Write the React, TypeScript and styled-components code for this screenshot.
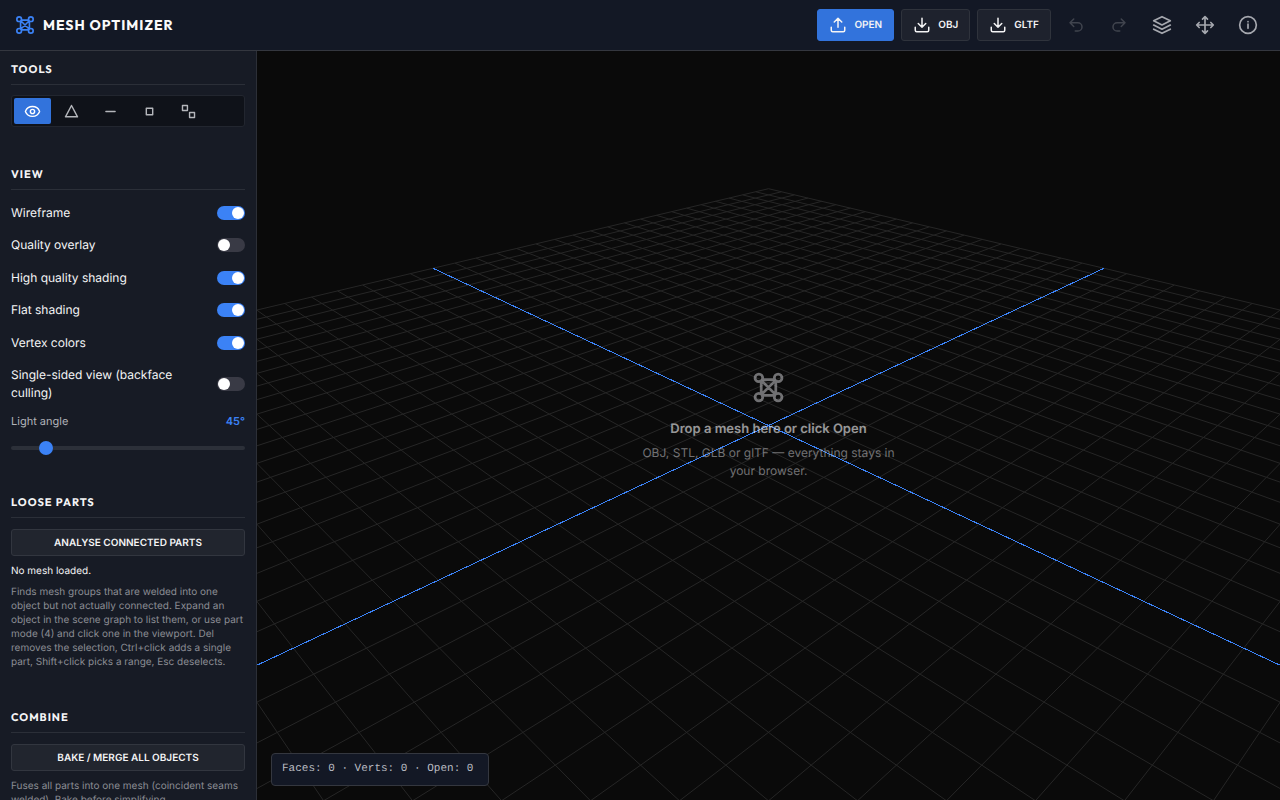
import React, { useState } from "react";
import styled, { createGlobalStyle } from "styled-components";

const GlobalStyle = createGlobalStyle`
  *, *::before, *::after { box-sizing: border-box; }
  html, body, #root { height: 100%; }
  body {
    margin: 0;
    background: #0a0a0a;
    color: #f4f4f5;
    font-family: Inter, "Liberation Sans", sans-serif;
    font-size: 12px;
    line-height: 18px;
    text-rendering: geometricPrecision;
    overflow: hidden;
  }
  button, input { font: inherit; color: inherit; margin: 0; text-rendering: inherit; }
  h1, h2, p { margin: 0; }
`;

const Shell = styled.div`
  display: flex;
  flex-direction: column;
  height: 100vh;
`;

const TopBar = styled.header`
  display: flex;
  align-items: center;
  justify-content: space-between;
  flex: none;
  padding: 9px 14px 9px 15px;
  background: #131825;
  border-bottom: 1px solid #34373f;
`;

const Brand = styled.div`
  display: flex;
  align-items: center;
  gap: 8px;
  color: #3b82f6;
`;

const BrandName = styled.h1`
  color: #fafafa;
  font-family: Outfit, Lato, sans-serif;
  font-size: 14px;
  line-height: 18px;
  font-weight: 700;
  letter-spacing: 1px;
`;

const Actions = styled.div`
  display: flex;
  align-items: center;
  gap: 7px;
`;

const ActionButton = styled.button<{ $primary?: boolean }>`
  display: flex;
  align-items: center;
  gap: 7px;
  height: 32px;
  padding: 0 11px;
  border: 1px solid ${(p) => (p.$primary ? "#3273dc" : "#2f333c")};
  border-radius: 3px;
  background: ${(p) => (p.$primary ? "#3273dc" : "#1e222d")};
  font-size: 10px;
  font-weight: 600;
`;

const IconButton = styled.button`
  display: grid;
  place-items: center;
  width: 36px;
  height: 32px;
  padding: 0;
  border: 0;
  background: none;
  color: #a6a8af;
  &:disabled { color: #40444e; }
`;

const Body = styled.div`
  display: flex;
  flex: 1;
  min-height: 0;
`;

const Sidebar = styled.aside`
  display: flex;
  flex-direction: column;
  flex: none;
  gap: 40px;
  width: 257px;
  padding: 11px;
  background: #171b25;
  border-right: 1px solid #2c2f37;
  overflow-y: auto;
  scrollbar-width: none;
`;

const Section = styled.section`
  display: flex;
  flex-direction: column;
  flex: none;
`;

const SectionTitle = styled.h2`
  margin-bottom: 10px;
  padding-bottom: 8px;
  border-bottom: 1px solid #2b2f38;
  font-family: Outfit, Lato, sans-serif;
  font-size: 11px;
  line-height: 14px;
  font-weight: 700;
  letter-spacing: 1px;
`;

const ToolGroup = styled.div`
  display: flex;
  gap: 2px;
  padding: 2px;
  border: 1px solid #22262f;
  border-radius: 3px;
  background: #0f1219;
`;

const ToolButton = styled.button`
  display: grid;
  place-items: center;
  width: 37px;
  height: 26px;
  padding: 0;
  border: 0;
  border-radius: 2px;
  background: none;
  color: #b4b6bb;
  &[aria-pressed="true"] { background: #3273dc; color: #fff; }
`;

const ToggleList = styled.div`
  display: flex;
  flex-direction: column;
  justify-content: space-between;
  min-height: 202px;
  padding-top: 4px;
`;

const ToggleRow = styled.label`
  display: flex;
  align-items: center;
  justify-content: space-between;
  gap: 28px;
`;

const Switch = styled.input`
  appearance: none;
  flex: none;
  display: flex;
  width: 28px;
  height: 14px;
  padding: 1px;
  border-radius: 7px;
  background: #393a45;
  &::before {
    content: "";
    width: 12px;
    height: 12px;
    border-radius: 50%;
    background: #fff;
  }
  &:checked { background: #3b82f6; justify-content: flex-end; }
`;

const SliderHead = styled.div`
  display: flex;
  justify-content: space-between;
  margin: 11px 0 12px;
  font-size: 11px;
  line-height: 16px;
  color: #b0b2b8;
  output { color: #3b82f6; font-weight: 600; }
`;

const Slider = styled.input`
  appearance: none;
  width: 100%;
  height: 14px;
  background: none;
  &::-webkit-slider-runnable-track {
    height: 4px;
    border-radius: 2px;
    background: #2c3039;
  }
  &::-webkit-slider-thumb {
    appearance: none;
    width: 14px;
    height: 14px;
    margin-top: -5px;
    border-radius: 50%;
    background: #3b82f6;
  }
`;

const WideButton = styled.button`
  height: 27px;
  margin: 1px 0 8px;
  padding: 0 11px;
  border: 1px solid #32363f;
  border-radius: 3px;
  background: #21252e;
  font-size: 10px;
  font-weight: 600;
`;

const Status = styled.p`
  margin-bottom: 6px;
  font-size: 10px;
  line-height: 15px;
`;

const Hint = styled.p`
  margin-bottom: 1px;
  color: #8b8d94;
  font-size: 10px;
  line-height: 14px;
`;

const Viewport = styled.main`
  display: grid;
  place-items: center;
  position: relative;
  flex: 1;
  min-width: 0;
  overflow: hidden;
`;

const Scene = styled.svg`
  position: absolute;
  inset: 0;
  width: 100%;
  height: 100%;
`;

const EmptyState = styled.div`
  position: relative;
  display: flex;
  flex-direction: column;
  align-items: center;
  max-width: 260px;
  text-align: center;
  opacity: 0.6;
  color: #b4b4b8;
`;

const EmptyTitle = styled.p`
  margin: 16px 0 6px;
  color: #f4f4f5;
  font-size: 13px;
  font-weight: 600;
`;

const Stats = styled.div`
  position: absolute;
  left: 14px;
  bottom: 14px;
  min-width: 218px;
  padding: 7px 10px;
  border: 1px solid #34373f;
  border-radius: 4px;
  background: #131825;
  color: #b9bbc1;
  font-family: "Liberation Mono", monospace;
  font-size: 11px;
  line-height: 17px;
  white-space: pre;
`;

const Stroke = styled.svg`
  display: block;
  flex: none;
  fill: none;
  stroke: currentColor;
  stroke-linecap: round;
  stroke-linejoin: round;
`;

type IconName =
  | "mesh" | "upload" | "download" | "undo" | "redo" | "layers" | "move" | "info"
  | "eye" | "face" | "edge" | "vertex" | "part";

const shapes: Record<IconName, React.ReactNode> = {
  mesh: (
    <>
      <circle cx="5" cy="5" r="2.8" />
      <circle cx="19" cy="5" r="2.8" />
      <circle cx="5" cy="19" r="2.8" />
      <circle cx="19" cy="19" r="2.8" />
      <path d="M7.8 6.2h8.4M7.8 17.8h8.4M6.7 7.6v8.8M17.3 7.6v8.8M7.2 7.2l9.6 9.6M16.8 7.2l-9.6 9.6" />
    </>
  ),
  upload: <path d="M21 15v4a2 2 0 0 1-2 2H5a2 2 0 0 1-2-2v-4M17 8l-5-5-5 5M12 3v12" />,
  download: <path d="M21 15v4a2 2 0 0 1-2 2H5a2 2 0 0 1-2-2v-4M7 10l5 5 5-5M12 15V3" />,
  undo: <path d="M9 14L4 9l5-5M4 9h10.5a5.5 5.5 0 0 1 0 11H11" />,
  redo: <path d="M15 14l5-5-5-5M20 9H9.5a5.5 5.5 0 0 0 0 11H13" />,
  layers: <path d="M12 2L2 7l10 5 10-5zM2 12l10 5 10-5M2 17l10 5 10-5" />,
  move: <path d="M5 9l-3 3 3 3M9 5l3-3 3 3M15 19l-3 3-3-3M19 9l3 3-3 3M2 12h20M12 2v20" />,
  info: (
    <>
      <circle cx="12" cy="12" r="10" />
      <path d="M12 16v-5M12 8h.01" />
    </>
  ),
  eye: (
    <>
      <path d="M2.1 12.3a1 1 0 0 1 0-.7 10.75 10.75 0 0 1 19.8 0 1 1 0 0 1 0 .7 10.75 10.75 0 0 1-19.8 0" />
      <circle cx="12" cy="12" r="3" />
    </>
  ),
  face: <path d="M12 3.5l8.5 16h-17z" />,
  edge: <path d="M5.5 12h13" />,
  vertex: <path d="M7.5 7.5h9v9h-9z" />,
  part: <path d="M3.5 3.5h7v7h-7zM13.5 13.5h7v7h-7z" />,
};

function Icon({ name, size, weight = 2 }: { name: IconName; size: number; weight?: number }) {
  return (
    <Stroke viewBox="0 0 24 24" width={size} height={size} strokeWidth={weight} aria-hidden="true">
      {shapes[name]}
    </Stroke>
  );
}

/* Floor grid: 10 units wide, 40 divisions, seen by a 45° camera at (4, 3, 4). */
const HALF = 5;
const STEP = 0.25;
const FOCAL = 374.5 / Math.tan(Math.PI / 8);
const DIST = Math.sqrt(41);
const SIN = 3 / DIST;
const COS = Math.sqrt(32) / DIST;

function projectLine(ax: number, az: number, bx: number, bz: number): string {
  const depth = (x: number, z: number) => DIST - ((x + z) / Math.SQRT2) * COS;
  const near = 0.5;
  let x2 = bx;
  let z2 = bz;
  const da = depth(ax, az);
  const db = depth(bx, bz);
  if (da < near) return "";
  if (db < near) {
    const t = (da - near) / (da - db);
    x2 = ax + (bx - ax) * t;
    z2 = az + (bz - az) * t;
  }
  const at = (x: number, z: number) => {
    const d = depth(x, z);
    const sx = (FOCAL * (x - z)) / Math.SQRT2 / d;
    const sy = (FOCAL * SIN * (x + z)) / Math.SQRT2 / d;
    return `${sx.toFixed(1)} ${sy.toFixed(1)}`;
  };
  return `M${at(ax, az)}L${at(x2, z2)}`;
}

const offsets = Array.from({ length: (2 * HALF) / STEP + 1 }, (_, i) => -HALF + i * STEP);
const gridPath = offsets
  .filter((o) => o !== 0)
  .map((o) => projectLine(o, -HALF, o, HALF) + projectLine(-HALF, o, HALF, o))
  .join("");
const axisPath = projectLine(0, -HALF, 0, HALF) + projectLine(-HALF, 0, HALF, 0);

const toggles: [string, boolean][] = [
  ["Wireframe", true],
  ["Quality overlay", false],
  ["High quality shading", true],
  ["Flat shading", true],
  ["Vertex colors", true],
  ["Single-sided view (backface culling)", false],
];

const tools: [IconName, string][] = [
  ["eye", "View"],
  ["face", "Faces"],
  ["edge", "Edges"],
  ["vertex", "Vertices"],
  ["part", "Parts"],
];

export default function App() {
  const [tool, setTool] = useState<IconName>("eye");
  const [angle, setAngle] = useState(45);

  return (
    <>
      <GlobalStyle />
      <Shell>
        <TopBar>
          <Brand>
            <Icon name="mesh" size={20} />
            <BrandName>MESH OPTIMIZER</BrandName>
          </Brand>
          <Actions>
            <ActionButton $primary><Icon name="upload" size={18} />OPEN</ActionButton>
            <ActionButton><Icon name="download" size={18} />OBJ</ActionButton>
            <ActionButton><Icon name="download" size={18} />GLTF</ActionButton>
            <IconButton aria-label="Undo" disabled><Icon name="undo" size={18} /></IconButton>
            <IconButton aria-label="Redo" disabled><Icon name="redo" size={18} /></IconButton>
            <IconButton aria-label="Scene graph"><Icon name="layers" size={20} /></IconButton>
            <IconButton aria-label="Transform"><Icon name="move" size={20} /></IconButton>
            <IconButton aria-label="About"><Icon name="info" size={20} /></IconButton>
          </Actions>
        </TopBar>
        <Body>
          <Sidebar>
            <Section>
              <SectionTitle>TOOLS</SectionTitle>
              <ToolGroup>
                {tools.map(([name, label]) => (
                  <ToolButton key={name} aria-label={label} aria-pressed={tool === name} onClick={() => setTool(name)}>
                    <Icon name={name} size={17} />
                  </ToolButton>
                ))}
              </ToolGroup>
            </Section>
            <Section>
              <SectionTitle>VIEW</SectionTitle>
              <ToggleList>
                {toggles.map(([label, on]) => (
                  <ToggleRow key={label}>
                    {label}
                    <Switch type="checkbox" defaultChecked={on} />
                  </ToggleRow>
                ))}
              </ToggleList>
              <SliderHead>
                <label htmlFor="light-angle">Light angle</label>
                <output htmlFor="light-angle">{angle}°</output>
              </SliderHead>
              <Slider
                id="light-angle"
                type="range"
                min={0}
                max={360}
                value={angle}
                onChange={(e) => setAngle(Number(e.target.value))}
              />
            </Section>
            <Section>
              <SectionTitle>LOOSE PARTS</SectionTitle>
              <WideButton>ANALYSE CONNECTED PARTS</WideButton>
              <Status>No mesh loaded.</Status>
              <Hint>
                Finds mesh groups that are welded into one object but not actually connected. Expand an
                object in the scene graph to list them, or use part mode (4) and click one in the
                viewport. Del removes the selection, Ctrl+click adds a single part, Shift+click picks a
                range, Esc deselects.
              </Hint>
            </Section>
            <Section>
              <SectionTitle>COMBINE</SectionTitle>
              <WideButton>BAKE / MERGE ALL OBJECTS</WideButton>
              <Hint>Fuses all parts into one mesh (coincident seams welded). Bake before simplifying.</Hint>
            </Section>
          </Sidebar>
          <Viewport>
            <Scene viewBox="-511.5 -374.5 1023 749" preserveAspectRatio="xMidYMid slice" fill="none" aria-hidden="true">
              <path d={gridPath} stroke="#262626" />
              <path d={axisPath} stroke="#3b82f6" shapeRendering="crispEdges" />
            </Scene>
            <EmptyState>
              <Icon name="mesh" size={33} />
              <EmptyTitle>Drop a mesh here or click Open</EmptyTitle>
              <p>OBJ, STL, GLB or glTF — everything stays in your browser.</p>
            </EmptyState>
            <Stats>Faces: 0 · Verts: 0 · Open: 0</Stats>
          </Viewport>
        </Body>
      </Shell>
    </>
  );
}
